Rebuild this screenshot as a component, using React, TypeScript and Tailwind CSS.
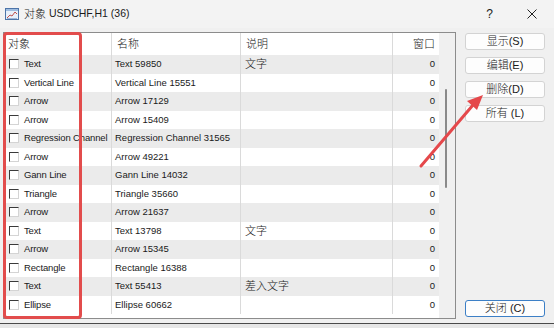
import React from 'react';

type Row = { type: string; name: string; desc: string; win: number };

const ROWS: Row[] = [
  { type: 'Text', name: 'Text 59850', desc: '文字', win: 0 },
  { type: 'Vertical Line', name: 'Vertical Line 15551', desc: '', win: 0 },
  { type: 'Arrow', name: 'Arrow 17129', desc: '', win: 0 },
  { type: 'Arrow', name: 'Arrow 15409', desc: '', win: 0 },
  { type: 'Regression Channel', name: 'Regression Channel 31565', desc: '', win: 0 },
  { type: 'Arrow', name: 'Arrow 49221', desc: '', win: 0 },
  { type: 'Gann Line', name: 'Gann Line 14032', desc: '', win: 0 },
  { type: 'Triangle', name: 'Triangle 35660', desc: '', win: 0 },
  { type: 'Arrow', name: 'Arrow 21637', desc: '', win: 0 },
  { type: 'Text', name: 'Text 13798', desc: '文字', win: 0 },
  { type: 'Arrow', name: 'Arrow 15345', desc: '', win: 0 },
  { type: 'Rectangle', name: 'Rectangle 16388', desc: '', win: 0 },
  { type: 'Text', name: 'Text 55413', desc: '差入文字', win: 0 },
  { type: 'Ellipse', name: 'Ellipse 60662', desc: '', win: 0 },
];

const FONT = "font-['Liberation_Sans','Noto_Sans_CJK_SC',sans-serif]";

function Checkbox() {
  return (
    <span className="inline-block w-[10px] h-[10px] bg-white border-t border-l border-t-[#3a3a3a] border-l-[#3a3a3a] border-r border-b border-r-[#d4d4d4] border-b-[#d4d4d4] shrink-0" />
  );
}

function Btn({ children, primary }: { children: React.ReactNode; primary?: boolean }) {
  return (
    <div
      className={`h-[17px] w-[80px] flex items-center justify-center rounded-[3px] bg-[#fdfdfd] text-[11px] font-light text-[#1a1a1a] ${
        primary ? 'border border-[#3c7fc6]' : 'border border-[#d3d3d3]'
      }`}
    >
      {children}
    </div>
  );
}

function TitleIcon() {
  return (
    <svg width="14" height="12" viewBox="0 0 14 12">
      <rect x="0.5" y="0.5" width="13" height="11" fill="#e8f0fa" stroke="#4d74a8" />
      <rect x="1" y="1" width="12" height="2" fill="#9fbde0" />
      <polyline points="2,10 5,7 7,8 10,4 12,6" fill="none" stroke="#c0504d" strokeWidth="1" />
      <line x1="2" y1="10.5" x2="12" y2="10.5" stroke="#6a8fbf" strokeWidth="0.6" />
    </svg>
  );
}

export default function App() {
  return (
    <div className={`relative w-[554px] h-[328px] bg-[#f0f0f0] overflow-hidden ${FONT} text-[#1a1a1a]`}>
      {/* Title bar */}
      <div className="h-[28px] flex items-center bg-[#f3f3f3] pl-[5px]">
        <TitleIcon />
        <span className="ml-[5px] text-[11px] font-light">对象</span>
        <span className="ml-[3px] text-[10.5px]">USDCHF,H1 (36)</span>
        <span className="ml-auto text-[12px] mr-[34px]">?</span>
        <svg className="mr-[17px]" width="10" height="10" viewBox="0 0 10 10">
          <path d="M0.5 0.5 L9.5 9.5 M9.5 0.5 L0.5 9.5" stroke="#222" strokeWidth="1" />
        </svg>
      </div>

      <div className="flex pl-[3px] pt-[4px]">
        {/* Table box */}
        <div className="w-[453px] h-[287px] border border-[#8c8c8c] flex overflow-hidden">
          <div className="w-[435px] bg-white overflow-hidden">
            <div className="grid grid-cols-[108px_129px_152px_46px] h-[22px] bg-white text-[11px] font-light">
              <div className="border-r border-[#dadada] pl-[4px] flex items-center">对象</div>
              <div className="border-r border-[#dadada] pl-[5px] flex items-center">名称</div>
              <div className="border-r border-[#dadada] pl-[5px] flex items-center">说明</div>
              <div className="pr-[4px] flex items-center justify-end">窗口</div>
            </div>
            {ROWS.map((r, i) => (
              <div
                key={i}
                className={`grid grid-cols-[108px_129px_152px_46px] h-[18.5px] text-[9.5px] ${
                  i % 2 === 0 ? 'bg-[#ebebeb]' : 'bg-white'
                }`}
              >
                <div className="border-r border-[#dadada] pl-[5px] flex items-center gap-[5px] whitespace-nowrap overflow-hidden">
                  <Checkbox />
                  <span className="tracking-[-0.15px]">{r.type}</span>
                </div>
                <div className="border-r border-[#dadada] pl-[3px] flex items-center whitespace-nowrap">{r.name}</div>
                <div className="border-r border-[#dadada] pl-[4px] flex items-center text-[11px] font-light">{r.desc}</div>
                <div className="pr-[4px] flex items-center justify-end">{r.win}</div>
              </div>
            ))}
          </div>
          {/* scroll gutter */}
          <div className="flex-1 bg-[#f0f0f0] relative">
            <div className="absolute left-[6px] top-[56px] w-[2px] h-[99px] bg-[#8a8a8a] rounded-full" />
          </div>
        </div>

        {/* Buttons */}
        <div className="ml-[9px] h-[287px] flex flex-col pt-[1px] pb-[2px] gap-[7px]">
          <Btn>显示(S)</Btn>
          <Btn>编辑(E)</Btn>
          <Btn>删除(D)</Btn>
          <Btn>所有 (L)</Btn>
          <div className="mt-auto">
            <Btn primary>
              <span className="h-[18px] flex items-center">关闭 (C)</span>
            </Btn>
          </div>
        </div>
      </div>

      {/* window bottom edge */}
      <div className="absolute left-0 right-0 top-[323px] h-[1px] bg-[#4a4a4a]" />
      <div className="absolute left-0 right-0 top-[324px] bottom-0 bg-[#e6e6e6]" />

      {/* red annotation: rectangle */}
      <div className="absolute left-[3px] top-[32px] w-[79px] h-[287px] border-[3px] border-[#e24c4c] rounded-[4px]" />
      {/* red annotation: arrow */}
      <svg className="absolute left-0 top-0" width="554" height="328" viewBox="0 0 554 328">
        <line x1="421" y1="166" x2="473" y2="105" stroke="#e5484b" strokeWidth="3" strokeLinecap="round" />
        <polygon points="483,95 467,101 477,110" fill="#e5484b" />
      </svg>
    </div>
  );
}
